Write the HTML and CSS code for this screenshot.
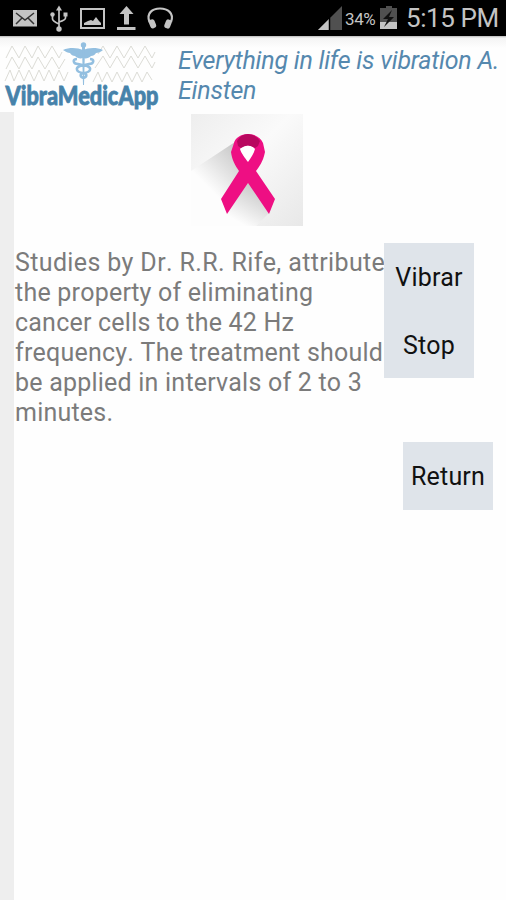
FILE: index.html
```html
<!DOCTYPE html>
<html lang="en">
<head>
    <meta charset="utf-8">
    <title>VibraMedicApp</title>
    <link rel="stylesheet" href="styles.css">
</head>
<body>
    <div class="status-bar">
        <svg class="status-icons" width="180" height="36" viewBox="0 0 180 36">
            <!-- mail -->
            <rect x="13" y="10" width="24" height="16.500" fill="#c4c4c4"/>
            <path d="M16 13l9 7 9-7M16 24l6-6M34 24l-6-6" fill="none" stroke="#333" stroke-width="1.500"/>
            <!-- usb -->
            <path d="M59 9v19M52.500 15v4q0 2 6.500 5M65.500 15v3q0 2-6.500 4" fill="none" stroke="#c4c4c4" stroke-width="1.700"/>
            <path d="M59 5.500l3 5h-6z" fill="#c4c4c4"/>
            <circle cx="59" cy="29" r="2.700" fill="#c4c4c4"/>
            <circle cx="52.500" cy="14.500" r="2.200" fill="#c4c4c4"/>
            <rect x="63.500" y="12.500" width="4" height="4" fill="#c4c4c4"/>
            <!-- picture -->
            <rect x="81" y="9" width="23" height="19" fill="none" stroke="#c4c4c4" stroke-width="2"/>
            <path d="M84 25v-2l4-2 3-1 2 1 3-4 3 4 2 2v2z" fill="#c4c4c4"/>
            <!-- upload -->
            <path d="M126.500 6l7 8h-4.500v10.500h-5V14h-4.500zM117 27h18.500v3H117z" fill="#c4c4c4"/>
            <!-- headphones -->
            <path d="M149.500 22c-3.500-9 3-13.500 10.500-13.500s14.500 4.500 11 13.500" fill="none" stroke="#c4c4c4" stroke-width="2.200"/>
            <rect x="149.500" y="19.500" width="6" height="9" rx="2.500" transform="rotate(-22 152 24)" fill="#c4c4c4"/>
            <rect x="165" y="19.500" width="6" height="9" rx="2.500" transform="rotate(22 168 24)" fill="#c4c4c4"/>
        </svg>
        <div class="status-right">
            <svg width="25" height="36" viewBox="0 0 25 36">
                <path d="M24 6v24H0z" fill="#505050"/>
                <path d="M11 19v11H0z" fill="#c4c4c4"/>
                <path d="M11.500 18v12" stroke="#000" stroke-width="1.500"/>
            </svg>
            <span class="battery-level">34%</span>
            <svg width="18" height="36" viewBox="0 0 18 36">
                <path d="M6 6h6v2h5v21H0V8h6z" fill="#505050"/>
                <path d="M0 22h17v7H0z" fill="#c4c4c4"/>
                <path d="M12 10l-9 9h5l-4 8 10-10H9z" fill="#111"/>
            </svg>
            <span class="clock">5:15 PM</span>
        </div>
    </div>

    <div class="header">
        <svg class="logo" width="170" height="76" viewBox="0 0 170 76">
            <g fill="none" stroke="#dcdcd6" stroke-width="1">
                <path d="M6 22l6-12 7 12 6-12 7 12 6-12 7 12 7-12 7 12 3-6M98 18l5-8 7 12 7-12 7 12 7-12 7 12 7-12 7 12 3-6"/>
                <path d="M6 33l6-12 7 12 6-12 7 12 6-12 7 12 7-12 7 12 6-10M95 32l8-12 7 12 7-12 7 12 7-12 7 12 7-12 7 12 3-6"/>
                <path d="M5 45l5-11 4 11 5-11 5 11 5-11 5 11 5-11 5 11 5-11 5 11 5-11 5 11 4-9M93 46l5-10 4 10 5-10 5 10 5-10 5 10 5-10 5 10 5-10 5 10 5-10 5 8"/>
            </g>
            <!-- caduceus -->
            <g fill="#93bfe0">
                <circle cx="83.500" cy="9" r="2.700"/>
                <path d="M83 14c-5-2-13-3-20 0 3 2 5 3 7 3 1 2 3 3 5 3 2 2 5 3 8 2 3 1 6 0 8-2 2 0 4-1 5-3 2 0 5-1 7-3-7-3-15-2-20 0z"/>
                <path d="M82 11h3l-1 38h-1z"/>
            </g>
            <path d="M77 23c-5 0-4 5 1 5l9 2c5 2 4 6-3 7-5 1-4 4 0 5M90 23c5 0 4 5-1 5l-9 2c-5 2-4 6 3 7 5 1 4 4 0 5" fill="none" stroke="#93bfe0" stroke-width="2.500"/>
            <text class="logo-text" x="5.500" y="68.500" textLength="153" lengthAdjust="spacingAndGlyphs">VibraMedicApp</text>
        </svg>
        <div class="quote">Everything in life is vibration A.<br>Einsten</div>
    </div>

    <div class="content">
        <svg class="ribbon" width="112" height="112" viewBox="0 0 112 112">
            <defs>
                <linearGradient id="tile" x1="0" y1="0" x2="1" y2="1">
                    <stop offset="0" stop-color="#eeeeee"/>
                    <stop offset="0.450" stop-color="#fafafa"/>
                    <stop offset="1" stop-color="#e8e8e8"/>
                </linearGradient>
                <linearGradient id="shade" gradientUnits="userSpaceOnUse" x1="54" y1="42" x2="20" y2="76">
                    <stop offset="0" stop-color="#c8c8c8"/>
                    <stop offset="1" stop-color="#fdfdfd"/>
                </linearGradient>
                <linearGradient id="shade-low" gradientUnits="userSpaceOnUse" x1="62" y1="74" x2="44" y2="106">
                    <stop offset="0" stop-color="#cdcdcd"/>
                    <stop offset="1" stop-color="#fdfdfd"/>
                </linearGradient>
            </defs>
            <rect width="112" height="112" fill="url(#tile)"/>
            <path d="M44 28L0 57v55h65l12-13-20-60z" fill="url(#shade)"/>
            <path d="M57 69l21 30-13 13H30l6-13z" fill="url(#shade-low)"/>
            <path d="M48 35q9-8 17 0l-8 15z" fill="#fff"/>
            <path d="M43 29c1-5 7-9 14-9s13 4 15 9l2 9c-2 10-6 15-9 19l19 28-6 15-21-31-21 31-6-15 18-28c-4-6-7-11-8-19zM57 48c3-4 6-9 7-13-4-5-11-5-15 0 1 4 5 9 8 13z" fill="#ee0f83" fill-rule="evenodd"/>
            <path d="M46 27q4-7 11-7t12 7l-2 5-3 2q-7-5-14 0l-3-2z" fill="#b8085f"/>
        </svg>

        <div class="row">
            <p class="description">Studies by Dr. R.R. Rife, attribute<br>the property of eliminating<br>cancer cells to the 42 Hz<br>frequency. The treatment should<br>be applied in intervals of 2 to 3<br>minutes.</p>
            <div class="actions">
                <button class="btn">Vibrar</button>
                <button class="btn">Stop</button>
            </div>
        </div>

        <button class="btn btn-return">Return</button>
    </div>
</body>
</html>
```
FILE: styles.css
```css
body {
    margin: 0;
    display: flex;
    flex-direction: column;
    height: 900px;
    overflow: hidden;
    background-color: #fefefe;
    font-family: Roboto, "Liberation Sans", sans-serif;
}

.status-bar {
    display: flex;
    justify-content: space-between;
    height: 36px;
    background-color: #000;
    color: #c4c4c4;
}

.status-right {
    display: flex;
    align-items: center;
    width: 188px;
    white-space: nowrap;
}

.battery-level {
    width: 32px;
    margin: 2px 3px 0 2px;
    font-size: 17px;
    letter-spacing: -0.4px;
}

.clock {
    margin-left: 8px;
    font-size: 26px;
    letter-spacing: -0.4px;
}

.header {
    display: flex;
    height: 76px;
    background: linear-gradient(#b8b8b8 0, #f4f4f4 2px, #fefefe 12px);
}

.logo {
    overflow: visible;
}

.logo-text {
    font-family: Lato, "Open Sans", sans-serif;
    font-size: 26px;
    font-weight: 900;
    fill: #4682aa;
    stroke: #4682aa;
    stroke-width: 0.8px;
}

.quote {
    padding: 10px 0 0 8px;
    color: #5588ae;
    font-size: 25px;
    font-style: italic;
    line-height: 30px;
    letter-spacing: -0.22px;
    white-space: nowrap;
}

.content {
    flex: 1;
    display: flex;
    flex-direction: column;
    border-left: 14px solid #eee; /* grey strip down the side */
}

.ribbon {
    margin: 2px 0 0 177px;
}

.row {
    display: flex;
    height: 135px;
    margin-top: 17px;
}

.description {
    width: 369px;
    margin: 5px 0 0 1px;
    color: #7b7b7b;
    font-size: 25px;
    font-kerning: none;
    line-height: 30px;
    letter-spacing: 0.22px;
    white-space: nowrap;
}

/* the initials make the first line run right up to the buttons */
.description::first-line {
    letter-spacing: 0.36px;
}

.actions {
    display: flex;
    flex-direction: column;
}

.btn {
    width: 90px;
    height: 67.5px;
    padding: 2px 0 0;
    border: none;
    background-color: #dfe4ea;
    color: #111;
    font-family: inherit;
    font-size: 25px;
    letter-spacing: 0.2px;
}

.btn-return {
    margin: 64px 0 0 389px;
}
```
